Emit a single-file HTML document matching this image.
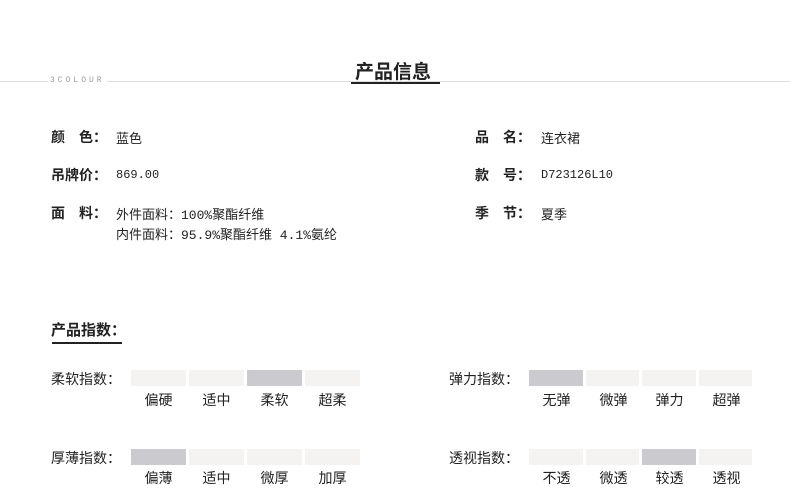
<!DOCTYPE html>
<html><head><meta charset="utf-8"><style>
body{margin:0;width:790px;height:492px;background:#fff;position:relative;font-family:"Liberation Sans","WenQuanYi Zen Hei","Noto Sans CJK SC",sans-serif;color:#222;overflow:hidden}
.a{position:absolute;white-space:nowrap}
.b{font-weight:bold;font-size:14px}
.v{font-size:13px;font-family:"Liberation Mono","WenQuanYi Zen Hei","Noto Sans CJK SC",monospace}
.bar{position:absolute;height:16px;background:#f4f3f1}
.on{background:#cbcbcf}
.l{position:absolute;font-size:14px;text-align:center;width:55px}
</style></head><body>
<div class="a" style="left:0;top:81px;width:790px;height:1px;background:#ddd"></div>
<div class="a" style="left:48px;top:76px;font-size:8px;letter-spacing:3px;color:#999;background:#fff;padding:0 2px;font-family:'Liberation Mono',monospace">3COLOUR</div>
<div class="a" style="left:355px;top:57px;font-size:19px;font-weight:bold;color:#222">产品信息</div>
<div class="a" style="left:351px;top:82px;width:89px;height:2px;background:#222"></div>

<div class="a b" style="left:51px;top:127px">颜　色：</div><div class="a v" style="left:116px;top:128px">蓝色</div>
<div class="a b" style="left:51px;top:165px">吊牌价：</div><div class="a v" style="left:116px;top:168px;font-size:12px">869.00</div>
<div class="a b" style="left:51px;top:203px">面　料：</div><div class="a v" style="left:116px;top:204px">外件面料：100%聚酯纤维</div>
<div class="a v" style="left:116px;top:224px">内件面料：95.9%聚酯纤维 4.1%氨纶</div>

<div class="a b" style="left:475px;top:127px">品　名：</div><div class="a v" style="left:541px;top:128px">连衣裙</div>
<div class="a b" style="left:475px;top:165px">款　号：</div><div class="a v" style="left:541px;top:168px;font-size:12px">D723126L10</div>
<div class="a b" style="left:475px;top:203px">季　节：</div><div class="a v" style="left:541px;top:204px">夏季</div>

<div class="a" style="left:51px;top:319px;font-size:15px;font-weight:bold">产品指数：</div>
<div class="a" style="left:52px;top:342px;width:70px;height:2px;background:#222"></div>

<div class="a" style="left:51px;top:369px;font-size:14px">柔软指数：</div>
<div class="bar" style="left:131px;top:370px;width:55px"></div><div class="bar" style="left:189px;top:370px;width:55px"></div><div class="bar on" style="left:247px;top:370px;width:55px"></div><div class="bar" style="left:305px;top:370px;width:55px"></div>
<div class="l" style="left:131px;top:390px">偏硬</div><div class="l" style="left:189px;top:390px">适中</div><div class="l" style="left:247px;top:390px">柔软</div><div class="l" style="left:305px;top:390px">超柔</div>

<div class="a" style="left:51px;top:448px;font-size:14px">厚薄指数：</div>
<div class="bar on" style="left:131px;top:449px;width:55px"></div><div class="bar" style="left:189px;top:449px;width:55px"></div><div class="bar" style="left:247px;top:449px;width:55px"></div><div class="bar" style="left:305px;top:449px;width:55px"></div>
<div class="l" style="left:131px;top:468px">偏薄</div><div class="l" style="left:189px;top:468px">适中</div><div class="l" style="left:247px;top:468px">微厚</div><div class="l" style="left:305px;top:468px">加厚</div>

<div class="a" style="left:449px;top:369px;font-size:14px">弹力指数：</div>
<div class="bar on" style="left:529px;top:370px;width:54px"></div><div class="bar" style="left:586px;top:370px;width:53px"></div><div class="bar" style="left:642px;top:370px;width:54px"></div><div class="bar" style="left:699px;top:370px;width:53px"></div>
<div class="l" style="left:529px;top:390px">无弹</div><div class="l" style="left:586px;top:390px">微弹</div><div class="l" style="left:642px;top:390px">弹力</div><div class="l" style="left:699px;top:390px">超弹</div>

<div class="a" style="left:449px;top:448px;font-size:14px">透视指数：</div>
<div class="bar" style="left:529px;top:449px;width:54px"></div><div class="bar" style="left:586px;top:449px;width:53px"></div><div class="bar on" style="left:642px;top:449px;width:54px"></div><div class="bar" style="left:699px;top:449px;width:53px"></div>
<div class="l" style="left:529px;top:468px">不透</div><div class="l" style="left:586px;top:468px">微透</div><div class="l" style="left:642px;top:468px">较透</div><div class="l" style="left:699px;top:468px">透视</div>
</body></html>
